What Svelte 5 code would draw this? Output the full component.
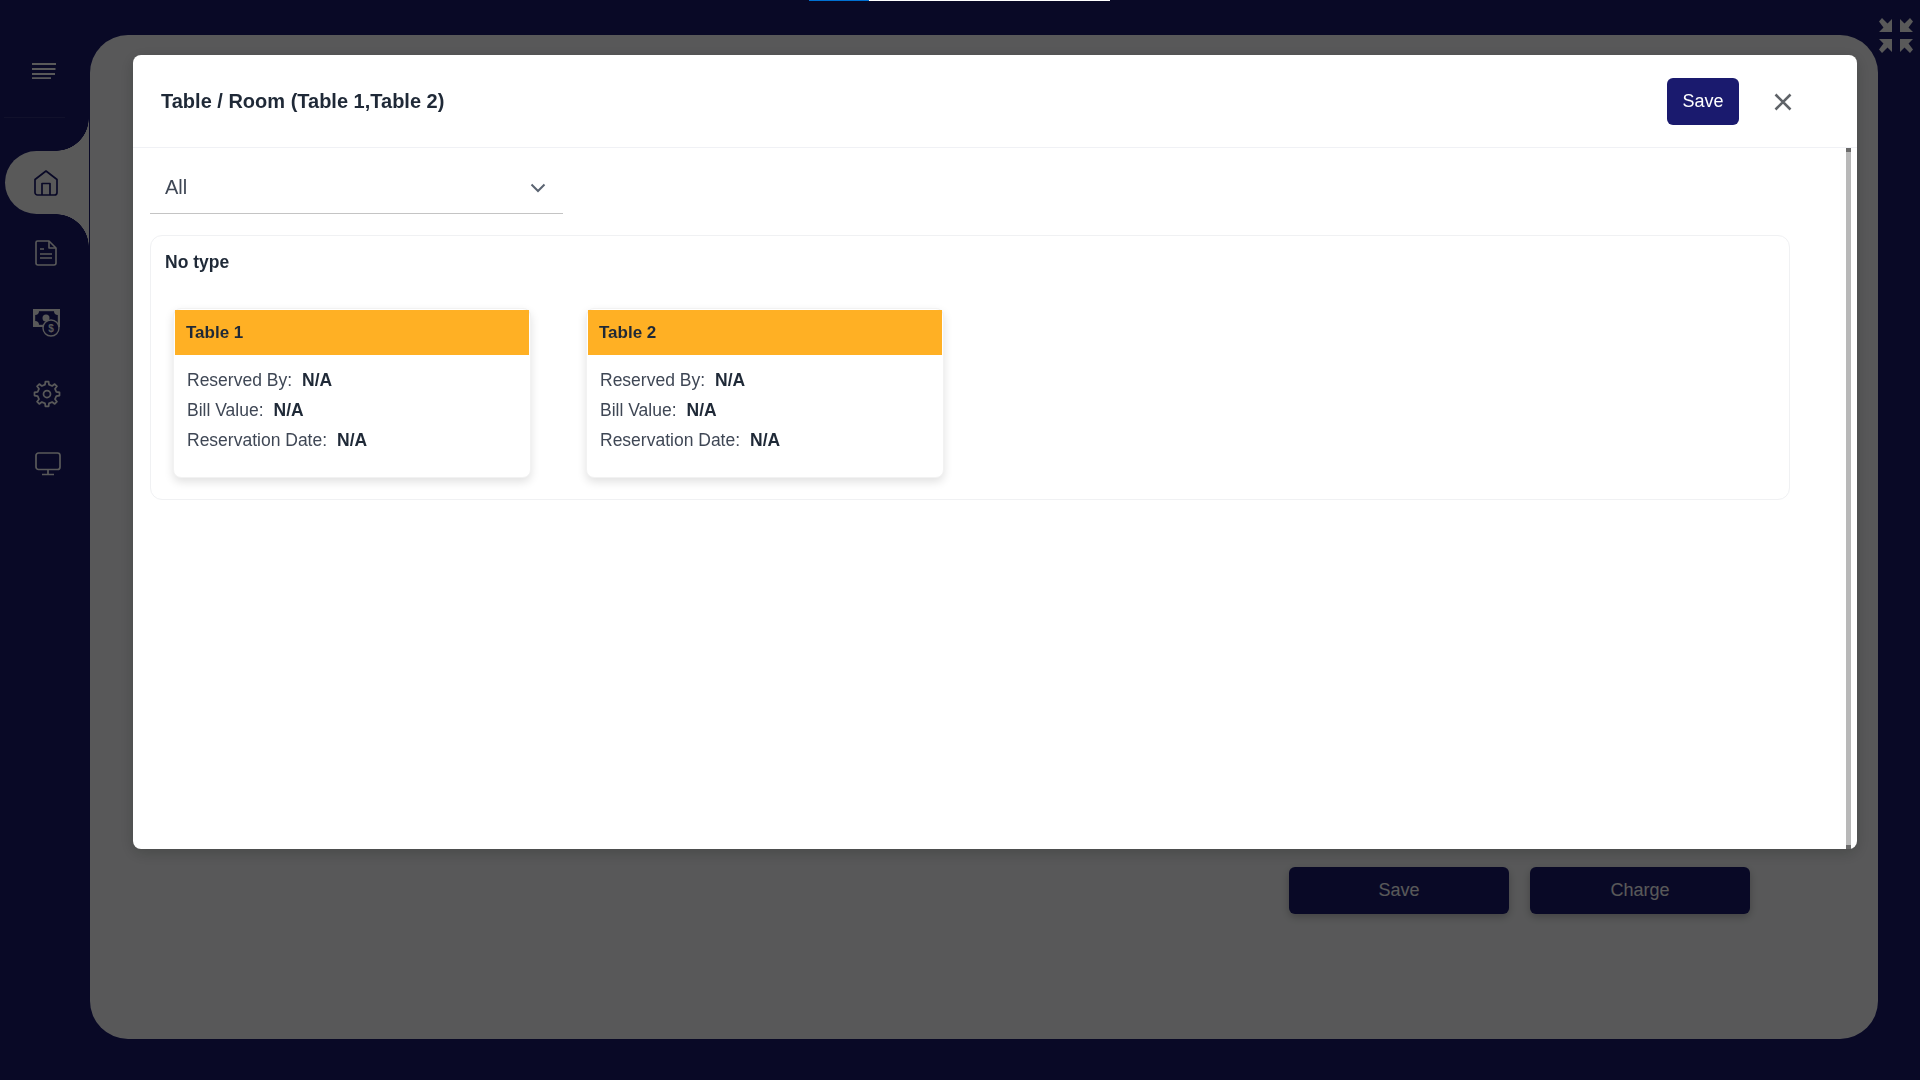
<script>
	const tables = ['Table 1', 'Table 2'];
	const fields = ['Reserved By:', 'Bill Value:', 'Reservation Date:'];

	// 8 tooth cog outline, drawn in a 24 box
	function cogPath() {
		const pts = [];
		for (let i = 0; i < 8; i++) {
			const a = (i * Math.PI) / 4 - Math.PI / 2;
			const step = Math.PI / 4;
			const at = (r, d) => {
				const x = 12 + r * Math.cos(a + d * step);
				const y = 12 + r * Math.sin(a + d * step);
				return `${x.toFixed(2)} ${y.toFixed(2)}`;
			};
			pts.push(at(8.2, -0.27), at(10.8, -0.16), at(10.8, 0.16), at(8.2, 0.27));
		}
		return `M${pts.join('L')}Z`;
	}
</script>

<div class="shell">
	<nav class="sidebar">
		<div class="menu">
			<svg width="24" height="16" viewBox="0 0 24 16" fill="none" stroke="#fff" stroke-width="1.8">
				<path d="M0 1h24M0 6h23.500M0 11h23M0 15.200h19" />
			</svg>
		</div>
		<div class="tab">
			<svg class="home" width="24" height="26" viewBox="0 0 24 26" fill="none" stroke="#1a1a6e" stroke-width="1.7" stroke-linejoin="round">
				<path d="M1 9.500 12 1l11 8.500V22.500a2.500 2.500 0 0 1-2.500 2.500H3.500A2.500 2.500 0 0 1 1 22.500Z" />
				<path d="M8 25V13.500h8V25" />
			</svg>
		</div>
		<div class="nav-icons">
			<svg class="doc" width="22" height="26" viewBox="0 0 22 26" fill="none" stroke="#fff" stroke-width="1.6" stroke-linejoin="round">
				<path d="M2.500 1H14l7 7v15a2 2 0 0 1-2 2H3a2 2 0 0 1-2-2V2.500A1.500 1.500 0 0 1 2.500 1Z" />
				<path d="M14 1v7h7M5 9h4M5 14h12M5 18h12" />
			</svg>
			<svg class="money" width="28" height="28" viewBox="0 0 28 28">
				<rect x="1.100" y="1.100" width="24.800" height="15.800" fill="#1a1a6e" stroke="#fff" stroke-width="2.200" />
				<path fill="#fff" d="M2 2h4a4 4 0 0 1-4 4ZM25 2h-4a4 4 0 0 0 4 4ZM2 16h4a4 4 0 0 0-4-4Z" />
				<circle cx="13" cy="9" r="3.500" fill="#fff" />
				<circle cx="18" cy="19" r="8" fill="#1a1a6e" stroke="#fff" stroke-width="1.400" />
				<text x="18" y="22.500" class="dollar">$</text>
			</svg>
			<svg class="cog" width="28" height="28" viewBox="0 0 24 24" fill="none" stroke="#fff" stroke-width="1.500" stroke-linejoin="round">
				<path d={cogPath()} />
				<circle cx="12" cy="12" r="3" />
			</svg>
			<svg class="screen" width="26" height="24" viewBox="0 0 26 24" fill="none" stroke="#fff" stroke-width="1.700" stroke-linejoin="round">
				<rect x="1" y="1" width="24" height="16.500" rx="2.500" />
				<path d="M13 17.500V22M7 22.500h12" />
			</svg>
		</div>
	</nav>

	<main class="panel">
		<div class="actions">
			<button class="action">Save</button>
			<button class="action">Charge</button>
		</div>
	</main>

	<aside class="rail">
		<svg width="36" height="35" viewBox="0 0 36 35" fill="#fff">
			<path d="M1 3.500 4 0 9.500 5.500 14 1V14H1L5.500 9.500Z" />
			<path d="M35 3.500 32 0 26.500 5.500 22 1V14H35L30.500 9.500Z" />
			<path d="M1 31.500 4 35 9.500 29.500 14 34V21H1L5.500 25.500Z" />
			<path d="M35 31.500 32 35 26.500 29.500 22 34V21H35L30.500 25.500Z" />
		</svg>
	</aside>
</div>

<div class="overlay"></div>
<div class="loader"><span class="loader-bar"></span></div>

<section class="modal">
	<header class="modal-head">
		<h2>Table / Room (Table 1,Table 2)</h2>
		<button class="primary">Save</button>
		<button class="close" aria-label="Close">
			<svg width="18" height="18" viewBox="0 0 18 18" fill="none" stroke="#5f6368" stroke-width="2.600">
				<path d="M1.500 1.500l15 15M16.500 1.500l-15 15" />
			</svg>
		</button>
	</header>
	<div class="modal-main">
		<div class="modal-body">
			<div class="select">
				<span>All</span>
				<svg width="16" height="10" viewBox="0 0 16 10" fill="none" stroke="#5b6472" stroke-width="2">
					<path d="M1.500 1.500 8 8l6.500-6.500" />
				</svg>
			</div>
			<div class="group">
				<h3>No type</h3>
				<div class="cards">
					{#each tables as table}
						<article class="card">
							<div class="card-title">{table}</div>
							<div class="card-rows">
								{#each fields as field}
									<p>{field}<b>N/A</b></p>
								{/each}
							</div>
						</article>
					{/each}
				</div>
			</div>
		</div>
		<div class="scrollbar"></div>
	</div>
</section>

<style>
	:global(body) {
		font-family: 'Liberation Sans', Arial, sans-serif;
		background: #1a1a6e;
		overflow: hidden;
	}

	.shell {
		display: flex;
		height: 1080px;
		background: #1a1a6e;
		box-sizing: border-box;
		padding: 35px 0 41px;
	}

	.sidebar {
		width: 90px;
		flex: none;
		display: flex;
		flex-direction: column;
		margin-top: -35px;
	}

	.menu {
		height: 118px;
		box-sizing: border-box;
		padding: 63px 0 0 28px;
		margin: 0 25px 0 4px;
		border-bottom: 1px solid rgba(255, 255, 255, 0.1);
	}

	.menu svg,
	.nav-icons svg {
		display: block;
	}

	.tab {
		position: relative;
		width: 84px;
		height: 63px;
		margin: 33px 0 0 5px;
		background: #fff;
		border-radius: 32px 0 0 32px;
		display: flex;
		padding: 19px 0 0 29px;
		box-sizing: border-box;
	}

	.tab::before,
	.tab::after {
		content: '';
		position: absolute;
		right: 0;
		width: 33px;
		height: 33px;
	}

	.tab::before {
		top: -33px;
		background: radial-gradient(circle at 0 0, #1a1a6e 32.500px, #fff 33px);
	}

	.tab::after {
		bottom: -33px;
		background: radial-gradient(circle at 0 100%, #1a1a6e 32.500px, #fff 33px);
	}

	.nav-icons {
		display: flex;
		flex-direction: column;
		align-items: flex-start;
		padding: 26px 0 0 33px;
		gap: 44px;
	}

	.doc {
		margin-left: 2px;
	}

	.money {
		margin-top: -1px;
	}

	.cog {
		margin-top: -1px;
	}

	.screen {
		margin-left: 2px;
	}

	.dollar {
		font-size: 10px;
		font-weight: 700;
		fill: #fff;
		text-anchor: middle;
	}

	.panel {
		flex: 1;
		background: #fcfdff;
		border-radius: 38px;
		display: flex;
		flex-direction: column;
		justify-content: flex-end;
		padding: 0 128px 125px 0;
	}

	.actions {
		display: flex;
		justify-content: flex-end;
		gap: 21px;
	}

	.action {
		width: 220px;
		height: 47px;
		background: #1a1a6e;
		color: #fff;
		border: 0;
		border-radius: 6px;
		font: 400 18px 'Liberation Sans', Arial, sans-serif;
		box-shadow: 0 3px 8px rgba(0, 0, 0, 0.25);
	}

	.rail {
		width: 42px;
		flex: none;
		margin-top: -17px;
	}

	.overlay {
		position: fixed;
		inset: 0;
		background: rgba(0, 0, 0, 0.65);
	}

	.loader {
		position: fixed;
		top: 0;
		left: 809px;
		width: 301px;
		height: 1px;
		background: #fff;
	}

	.loader-bar {
		display: block;
		width: 60px;
		height: 1px;
		background: #0070d2;
	}

	.modal {
		position: fixed;
		left: 133px;
		top: 55px;
		width: 1724px;
		height: 794px;
		background: #fff;
		border-radius: 8px;
		display: flex;
		flex-direction: column;
		color: #1f2937;
		box-shadow: 0 4px 16px rgba(0, 0, 0, 0.2);
	}

	.modal-head {
		height: 93px;
		flex: none;
		box-sizing: border-box;
		border-bottom: 1px solid #f0f1f5;
		display: flex;
		align-items: center;
		padding: 0 65px 0 28px;
	}

	h2 {
		margin: 0 auto 0 0;
		font-size: 20px;
		font-weight: 700;
	}

	.primary {
		width: 72px;
		height: 47px;
		background: #1a1a6e;
		color: #fff;
		border: 0;
		border-radius: 6px;
		font: 400 18px 'Liberation Sans', Arial, sans-serif;
	}

	.close {
		background: none;
		border: 0;
		padding: 0;
		margin: 2px 0 0 35px;
		display: flex;
	}

	.modal-main {
		flex: 1;
		display: flex;
		min-height: 0;
	}

	.modal-body {
		flex: 1;
		padding: 0 56px 0 17px;
	}

	.scrollbar {
		width: 5px;
		flex: none;
		margin-right: 6px;
		background: linear-gradient(#6b6b6b 4px, #b8b8b8 4px, #b8b8b8 calc(100% - 4px), #6b6b6b calc(100% - 4px));
	}

	.select {
		height: 66px;
		box-sizing: border-box;
		width: 413px;
		border-bottom: 1px solid #c4c4c4;
		display: flex;
		align-items: center;
		justify-content: space-between;
		padding: 14px 17px 0 15px;
		font-size: 20px;
		color: #3f4755;
	}

	.group {
		margin-top: 21px;
		height: 265px;
		box-sizing: border-box;
		border: 1px solid #f0f1f3;
		border-radius: 12px;
		padding: 14px 0 0 14px;
	}

	h3 {
		margin: 0;
		font-size: 17.500px;
		font-weight: 700;
		line-height: 24px;
	}

	.cards {
		display: flex;
		gap: 55px;
		margin: 34px 0 0 8px;
	}

	.card {
		width: 358px;
		height: 170px;
		box-sizing: border-box;
		border: 1px solid #f2f2f2;
		border-radius: 8px;
		padding-top: 1px;
		box-shadow: 0 4px 10px rgba(0, 0, 0, 0.12);
		background: #fff;
	}

	.card-title {
		height: 45px;
		margin: 0 1px;
		background: #ffb024;
		display: flex;
		align-items: center;
		padding-left: 11px;
		font-size: 17px;
		font-weight: 700;
	}

	.card + .card .card-title {
		margin-left: 1px;
	}

	.card-rows {
		padding: 10px 0 0 13px;
	}

	p {
		margin: 0;
		font-size: 17.500px;
		line-height: 30px;
		color: #3f4755;
	}

	b {
		margin-left: 10px;
		font-weight: 700;
		color: #1f2937;
	}
</style>
